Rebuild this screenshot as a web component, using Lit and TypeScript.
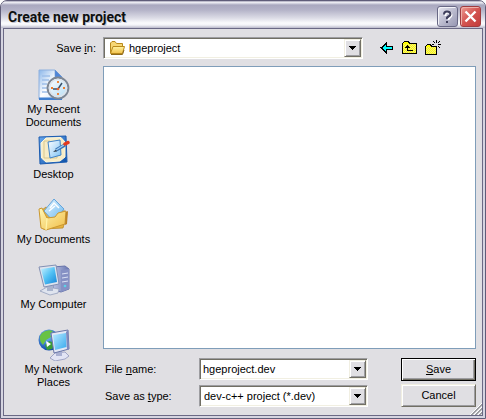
import { LitElement, html, css, svg } from "lit";
import { customElement } from "lit/decorators.js";

const recentIcon = svg`
  <defs>
    <linearGradient id="rp" x1="0" y1="0" x2="1" y2="1"><stop offset="0" stop-color="#8ab6ea"/><stop offset=".5" stop-color="#fff"/><stop offset="1" stop-color="#b9d8f6"/></linearGradient>
    <linearGradient id="rc" x1="0" y1="0" x2="1" y2="1"><stop offset="0" stop-color="#fff"/><stop offset="1" stop-color="#b4dcf4"/></linearGradient>
  </defs>
  <path d="M1 1H17L24 8V30H1Z" fill="url(#rp)" stroke="#8fb0de"/>
  <path d="M17 1V8H24Z" fill="#4f86d8" stroke="#6a93cf" stroke-width=".6"/>
  <path d="M4 7H12M4 11H11M4 15H9M4 19H9M4 23H10" stroke="#9dbfe9" stroke-width="1.3"/>
  <path d="M1 28.500H24V31H1Z" fill="#3f7fd0"/>
  <circle cx="20" cy="19" r="10.400" fill="url(#rc)" stroke="#7e8794" stroke-width="2"/>
  <circle cx="20" cy="19" r="8.600" fill="none" stroke="#dde3ea" stroke-width="1.400"/>
  <path d="M20 12V14M20 24V26M13 19H15M25 19H27" stroke="#ef7d2c" stroke-width="1.800"/>
  <path d="M24 14L20 20L15 20" fill="none" stroke="#3a5068" stroke-width="1.500"/>
  <circle cx="20" cy="20" r="1.300" fill="#e8622c"/>`;

const desktopIcon = svg`
  <defs>
    <linearGradient id="db" x1="0" y1="0" x2="1" y2="1"><stop offset="0" stop-color="#68a8ee"/><stop offset="1" stop-color="#0c4fa8"/></linearGradient>
    <linearGradient id="dp" x1="0" y1="0" x2="1" y2="1"><stop offset="0" stop-color="#fff"/><stop offset="1" stop-color="#7cc2f4"/></linearGradient>
  </defs>
  <path d="M1 3L28 2L29 28L2 30Z" fill="url(#db)" stroke="#1a5bb0"/>
  <path d="M8 4L23 3.500L27 8L27 23L22 27L8 28L3.500 24L3 9Z" fill="#f7ecc6" stroke="#fff8dc"/>
  <path d="M12 7H6V24H19V21" fill="none" stroke="#d9c88d"/>
  <path d="M10 8L22 6L23 21L12 24Z" fill="url(#dp)" stroke="#3f83c8"/>
  <path d="M18 16L27 11" stroke="#3b75b6" stroke-width="3.200"/>
  <path d="M18 16L26 11" stroke="#9ed0f5" stroke-width="1.200"/>
  <path d="M27 10L30 8.500" stroke="#e23a1e" stroke-width="3.400" stroke-linecap="round"/>
  <path d="M15 18L18 15.500L19 17.500Z" fill="#304050"/>`;

const documentsIcon = svg`
  <defs>
    <linearGradient id="mf" x1="0" y1="0" x2="1" y2="1"><stop offset="0" stop-color="#fff8b8"/><stop offset="1" stop-color="#f1be48"/></linearGradient>
    <linearGradient id="mp" x1="0" y1="0" x2="1" y2="1"><stop offset="0" stop-color="#e8f7ff"/><stop offset="1" stop-color="#65b4ee"/></linearGradient>
  </defs>
  <path d="M4 11L8 8L12 11L27 12L29 15L25 29L5 30Z" fill="#e8b43f" stroke="#bc8a24" stroke-width=".8"/>
  <path d="M16 0L26 10L16 23L6 12Z" fill="url(#mp)" stroke="#64a4dc"/>
  <path d="M12 9L16 4L21 9M11 12L17 7" fill="none" stroke="#fff" stroke-width="1.500"/>
  <path d="M1 10L4 9L9 19L17 18L20 14L28 12L27 25L8 31L3 29Z" fill="url(#mf)" stroke="#ca9730"/>
  <path d="M9 19L8 31" stroke="#fff4ad" stroke-width="1.200"/>
  <path d="M28 13L30 12L29 25L27 26Z" fill="#bd8324"/>`;

const computerIcon = svg`
  <defs>
    <linearGradient id="cs" x1="0" y1="0" x2="1" y2="1"><stop offset="0" stop-color="#c8f1ff"/><stop offset=".5" stop-color="#4fc0f4"/><stop offset="1" stop-color="#1783d6"/></linearGradient>
    <linearGradient id="ct" x1="0" y1="0" x2="1" y2="0"><stop offset="0" stop-color="#bcc4e2"/><stop offset="1" stop-color="#6674b0"/></linearGradient>
  </defs>
  <path d="M15 3L27 2L31 5V25L23 28L15 26Z" fill="url(#ct)" stroke="#6874ab"/>
  <path d="M23 6L31 5V25L23 28Z" fill="#8691c4"/>
  <path d="M24 10L30 9M24 14L30 13M24 18L30 17" stroke="#dce2f4"/>
  <circle cx="27" cy="22" r="1.300" fill="#5cd2e8"/>
  <path d="M2 27L9 23L21 25L20 29L12 31Z" fill="#dfe4ef" stroke="#949fbd" stroke-width=".8"/>
  <path d="M9 20H15V27H9Z" fill="#a9b4cd"/>
  <path d="M1 3L18 1L21 20L6 23Z" fill="#dee4ee" stroke="#8390b4"/>
  <path d="M3 5L16.500 3L19 18L7 20.500Z" fill="url(#cs)"/>`;

const networkIcon = svg`
  <defs>
    <radialGradient id="ng" cx=".4" cy=".3" r=".7"><stop offset="0" stop-color="#7fc2f5"/><stop offset="1" stop-color="#0d49ad"/></radialGradient>
    <linearGradient id="ns" x1="0" y1="0" x2="1" y2="1"><stop offset="0" stop-color="#b9e9ff"/><stop offset="1" stop-color="#36a9ee"/></linearGradient>
  </defs>
  <circle cx="11" cy="11" r="10.500" fill="url(#ng)"/>
  <path d="M4 4Q9 0 15 2L12 5L13 8L8 11L5 16Q1 12 2 7Z" fill="#68c244"/>
  <path d="M11 12L17 14L14 20L9 21L7 16Z" fill="#3a9c38"/>
  <path d="M8 12L13 15L9 18Z" fill="#fff"/>
  <path d="M12 29L17 24L27 23L31 27L27 30L17 32Z" fill="#e2e4f4" stroke="#8f96bd" stroke-width=".8"/>
  <path d="M18 21L24 20V27H18Z" fill="#a9b0d2"/>
  <path d="M13 4L30 1L31 20L16 24Z" fill="#e4e8f5" stroke="#6a76a8"/>
  <path d="M15 6L28 4L28.500 18L17 21Z" fill="url(#ns)"/>
  <path d="M30 1L31 20L29 21L28 3Z" fill="#7e89be"/>`;

const places = [
  { label: ["My Recent", "Documents"], icon: recentIcon },
  { label: ["Desktop"], icon: desktopIcon },
  { label: ["My Documents"], icon: documentsIcon },
  { label: ["My Computer"], icon: computerIcon },
  { label: ["My Network", "Places"], icon: networkIcon },
];

const arrow = html`<svg class="arrow" width="7" height="4" viewBox="0 0 7 4" shape-rendering="crispEdges" aria-hidden="true"><path d="M0 0H7V1H6V2H5V3H4V4H3V3H2V2H1V1H0Z" fill="#000"/></svg>`;

/* Checkerboard of single pixels for the dithered folder fronts. */
const dither = (x0: number, y0: number, x1: number, y1: number) => {
  let d = "";
  for (let y = y0; y < y1; y++)
    for (let x = x0 + ((x0 + y) % 2); x < x1; x += 2) d += `M${x} ${y}h1v1h-1z`;
  return d;
};

@customElement("app-root")
export class AppRoot extends LitElement {
  static styles = css`
    :host {
      display: block;
      background: #fff;
      font: 11px/13px "Liberation Sans", Arial, sans-serif;
      color: #000;
    }
    * { box-sizing: border-box; }
    svg { display: block; flex: none; }
    button, input, select { font: inherit; color: inherit; margin: 0; border-radius: 0; }
    .window {
      position: relative;
      display: flex;
      flex-direction: column;
      min-height: 100vh;
      border: 1px solid #5f5d79;
      border-radius: 7px 7px 0 0;
      background: #d5d4e0;
      padding: 0 2px 2px;
      overflow: hidden;
    }
    .titlebar {
      display: flex;
      align-items: center;
      gap: 2px;
      height: 27px;
      margin: 0 -2px;
      padding: 5px 4px 1px 7px;
      background: linear-gradient(#8886a0 0, #f4f4f8 1px, #e0e0ea 2px, #a9a8bf 4px, #b4b3c8 9px, #dcdce6 17px, #fbfbfd 22px, #f4f4f8 24px, #b9b8ca 27px);
    }
    h1 {
      flex: 1;
      margin: 0;
      font: bold 14px/20px Roboto, "Open Sans", sans-serif;
      color: #0e1010;
      text-shadow: 1px 1px 0 #c6c6d2;
    }
    .caption {
      display: grid;
      place-items: center;
      width: 21px;
      height: 21px;
      padding: 0;
      border: 1px solid #686885;
      border-radius: 3px;
      background: linear-gradient(135deg, #e6e6ef, #b4b4c9 60%, #9797b3);
      box-shadow: inset 1px 1px 0 #f3f3f8;
    }
    .close {
      border-color: #a03c40;
      background: linear-gradient(135deg, #ec9a92, #d45450 50%, #c23c3c);
      box-shadow: inset 1px 1px 0 #eeb0a9;
    }
    .body {
      flex: 1;
      display: grid;
      grid-template-columns: 99px 1fr;
      grid-template-rows: auto 1fr auto;
      row-gap: 7px;
      padding: 8px 6px 8px 0;
      border: 1px solid #6b6985;
      background: #e0dfe3;
    }
    .savein-label { padding: 5px 7px 0 0; text-align: right; }
    .lookin { display: flex; align-items: center; gap: 16px; }
    .lookin .combo { flex: 1; max-width: 260px; }
    .tools { display: flex; align-items: center; gap: 7px; }
    .tool {
      display: grid;
      place-items: center;
      width: 16px;
      height: 16px;
      padding: 0;
      border: 0;
      background: none;
    }
    .combo {
      display: flex;
      height: 22px;
      min-width: 0;
      border: 1px solid;
      border-color: #9d9da1 #fff #fff #9d9da1;
      background: #fff;
      box-shadow: inset 1px 1px 0 #716f64, inset -1px -1px 0 #f1efe2;
      padding: 2px;
      position: relative;
    }
    .combo input, .combo select {
      flex: 1;
      min-width: 0;
      padding: 0 18px 0 1px;
      border: 0;
      outline: 0;
      background: none;
      appearance: none;
      line-height: 16px;
    }
    .combo select { padding-left: 2px; }
    .folder { margin: 0 2px 0 3px; }
    .drop {
      position: absolute;
      top: 1px;
      right: 1px;
      bottom: 1px;
      display: grid;
      place-items: center;
      width: 17px;
      padding: 0;
      border: 1px solid;
      border-color: #f1efe2 #716f64 #716f64 #f1efe2;
      background: #e0dfe3;
      box-shadow: inset 1px 1px 0 #fff, inset -1px -1px 0 #9d9da1;
      pointer-events: none;
    }
    .places {
      grid-row: 2 / 4;
      margin: 3px 0 0;
      padding: 0;
      list-style: none;
    }
    .place {
      display: flex;
      flex-direction: column;
      align-items: center;
      gap: 2px;
      width: 100%;
      height: 65px;
      padding: 0;
      border: 0;
      background: none;
      line-height: 13px;
    }
    .place span { display: block; white-space: nowrap; }
    .files { border: 1px solid #7f9db9; background: #fff; }
    .form { display: flex; gap: 33px; padding: 2px 0 0; }
    .fields {
      flex: 1;
      min-width: 0;
      display: grid;
      grid-template-columns: 94px 1fr;
      row-gap: 5px;
      column-gap: 2px;
      align-items: center;
    }
    .fields label { padding-left: 2px; }
    .actions { display: flex; flex-direction: column; gap: 3px; width: 75px; }
    .action {
      height: 23px;
      padding: 0;
      border: 1px solid;
      border-color: #f1efe2 #716f64 #716f64 #f1efe2;
      background: #e0dfe3;
      box-shadow: inset 1px 1px 0 #fff, inset -1px -1px 0 #9d9da1;
    }
    .default {
      border-color: #000;
      box-shadow: inset 1px 1px 0 #fff, inset -1px -1px 0 #716f64, inset -2px -2px 0 #9d9da1;
    }
    .grip { position: absolute; right: 3px; bottom: 3px; }
  `;

  render() {
    return html`
      <main class="window">
        <header class="titlebar">
          <h1>Create new project</h1>
          <button class="caption" aria-label="Help">
            <svg width="11" height="14" viewBox="0 0 11 14"><path d="M2.500 5V3.500Q3 1.500 5.500 1.500T8.500 4Q8.500 5.500 7 6.500T5.500 9" transform="translate(1 1)" fill="none" stroke="#fff" stroke-width="2"/><path d="M2 4.500Q2 1.500 5 1.500T8.500 4Q8.500 5.500 6.500 6.500T5 9M5 11V13" fill="none" stroke="#3f3f5c" stroke-width="2"/></svg>
          </button>
          <button class="caption close" aria-label="Close">
            <svg width="13" height="13" viewBox="0 0 13 13"><path d="M1.500 1.500L11.500 11.500M11.500 1.500L1.500 11.500" stroke="#fff" stroke-width="2.400"/></svg>
          </button>
        </header>
        <div class="body">
          <label class="savein-label" for="savein">Save <u>i</u>n:</label>
          <div class="lookin">
            <div class="combo">
              <svg class="folder" width="16" height="16" viewBox="0 0 16 16">
                <defs><linearGradient id="ff" x1="0" y1="0" x2="0" y2="1"><stop offset="0" stop-color="#fff3a0"/><stop offset="1" stop-color="#f2c14a"/></linearGradient></defs>
                <path d="M1.500 13V3L3 1.500H6L7.500 3.500H13.500V7" fill="#f7d774" stroke="#b98a1c"/>
                <path d="M1.500 13.500L4 6.500H15.500L13.500 13.500Z" fill="url(#ff)" stroke="#b98a1c"/>
                <path d="M2 14.500H13.500L15 10" fill="none" stroke="#8f6a1a"/>
              </svg>
              <select id="savein"><option>hgeproject</option></select>
              <span class="drop">${arrow}</span>
            </div>
            <nav class="tools">
              <button class="tool" aria-label="Back">
                <svg width="14" height="12" viewBox="0 0 14 12" shape-rendering="crispEdges"><path d="M6 0H7V4H13V8H7V12H6V11H5V10H4V9H3V8H2V7H1V6H0V5H2V4H3V3H4V2H5V1H6Z" fill="#000"/><path d="M5 3H6V5H12V7H6V9H5V8H4V7H3V5H4V4H5Z" fill="#0ff"/></svg>
              </button>
              <button class="tool" aria-label="Up one level">
                <svg width="16" height="16" viewBox="0 0 16 16"><path d="M0 3H1V2H2V1H7V2H8V3H15V14H0Z" fill="#000"/><path d="M1 4V3H2V2H6V3H7V4H14V13H1Z" fill="#ff0"/><path d=${dither(1, 4, 14, 13)} fill="#eee88a"/><path d="M5 5H6V6H7V7H8V8H6V10H11V11H5V8H3V7H4V6H5Z" fill="#000"/></svg>
              </button>
              <button class="tool" aria-label="Create new folder">
                <svg width="16" height="16" viewBox="0 0 16 16"><path d="M0 6H1V5H2V4H6V5H7V6H12V15H0Z" fill="#000"/><path d="M1 7V6H2V5H5V6H6V7H11V14H1Z" fill="#ff0"/><path d=${dither(1, 7, 11, 14)} fill="#eee88a"/><path d="M11 0H12V3H11ZM11 7H12V9H11ZM7 4H9V5H7ZM13 4H16V5H13ZM8 1H9V2H8ZM9 2H10V3H9ZM14 1H15V2H14ZM13 2H14V3H13ZM13 6H14V7H13ZM14 7H15V8H14ZM9 6H10V7H9Z" fill="#000"/></svg>
              </button>
            </nav>
          </div>
          <ul class="places">
            ${places.map((p) => html`<li><button class="place"><svg width="32" height="32" viewBox="0 0 32 32" aria-hidden="true">${p.icon}</svg><span>${p.label.map((l) => html`<span>${l}</span>`)}</span></button></li>`)}
          </ul>
          <section class="files" aria-label="Files"></section>
          <form class="form" @submit=${(e: Event) => e.preventDefault()}>
            <div class="fields">
              <label for="name">File <u>n</u>ame:</label>
              <div class="combo"><input id="name" type="text" value="hgeproject.dev"><span class="drop">${arrow}</span></div>
              <label for="type">Save as <u>t</u>ype:</label>
              <div class="combo"><select id="type"><option>dev-c++ project (*.dev)</option></select><span class="drop">${arrow}</span></div>
            </div>
            <div class="actions">
              <button class="action default" type="submit"><u>S</u>ave</button>
              <button class="action" type="button">Cancel</button>
            </div>
          </form>
        </div>
        <svg class="grip" width="12" height="12" viewBox="0 0 12 12" aria-hidden="true"><path d="M0 12L12 0M4 12L12 4M8 12L12 8" stroke="#fff"/><path d="M1 12L12 1M2 12L12 2M5 12L12 5M6 12L12 6M9 12L12 9M10 12L12 10" stroke="#9d9da1"/></svg>
      </main>
    `;
  }
}
